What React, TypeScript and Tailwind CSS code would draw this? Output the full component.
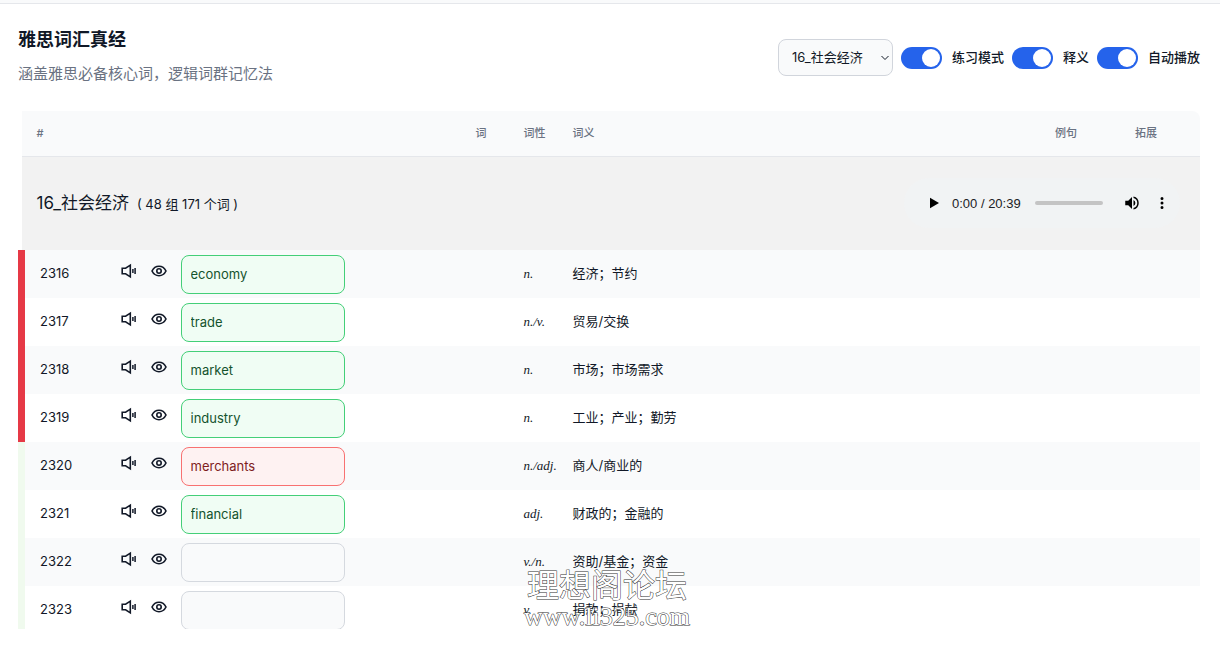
import { useState } from "react";

interface Word {
  id: number;
  answer: string;
  status: "correct" | "wrong" | "empty";
  pos: string;
  meaning: string;
  group: "red" | "green";
}

const words: Word[] = [
  { id: 2316, answer: "economy", status: "correct", pos: "n.", meaning: "经济；节约", group: "red" },
  { id: 2317, answer: "trade", status: "correct", pos: "n./v.", meaning: "贸易/交换", group: "red" },
  { id: 2318, answer: "market", status: "correct", pos: "n.", meaning: "市场；市场需求", group: "red" },
  { id: 2319, answer: "industry", status: "correct", pos: "n.", meaning: "工业；产业；勤劳", group: "red" },
  { id: 2320, answer: "merchants", status: "wrong", pos: "n./adj.", meaning: "商人/商业的", group: "green" },
  { id: 2321, answer: "financial", status: "correct", pos: "adj.", meaning: "财政的；金融的", group: "green" },
  { id: 2322, answer: "", status: "empty", pos: "v./n.", meaning: "资助/基金；资金", group: "green" },
  { id: 2323, answer: "", status: "empty", pos: "v.", meaning: "捐款；捐献", group: "green" },
];

const inputStyles = {
  correct: "bg-[#f0fdf4] border-[#44cf78] text-[#14532d]",
  wrong: "bg-[#fef2f2] border-[#f87171] text-[#7f1d1d]",
  empty: "bg-[#f9fafb] border-[#d5d9df] text-gray-900",
};

const groupStyles = {
  red: "border-l-[#e63946]",
  green: "border-l-[#f0faee]",
};

function SpeakerIcon() {
  return (
    <svg width="16" height="16" viewBox="0 0 16 16" fill="none" stroke="currentColor">
      <path d="M1.2 5.2H4.6L9.3 2.2V13.8L4.6 10.8H1.2Z" strokeWidth="1.6" />
      <path d="M11.9 6V10M14.1 4.9V11.1" strokeWidth="1.5" />
    </svg>
  );
}

function EyeIcon() {
  return (
    <svg width="16" height="16" viewBox="0 0 16 16" fill="none" stroke="currentColor" strokeWidth="1.6">
      <path d="M1 8C2.4 5.1 4.9 3.3 8 3.3S13.6 5.1 15 8C13.6 10.9 11.1 12.7 8 12.7S2.4 10.9 1 8Z" />
      <circle cx="8" cy="8" r="2.2" />
    </svg>
  );
}

function Toggle({ label }: { label: string }) {
  const [on, setOn] = useState(true);
  return (
    <label className="flex items-center cursor-pointer">
      <input
        type="checkbox"
        className="sr-only peer"
        checked={on}
        onChange={(e) => setOn(e.target.checked)}
      />
      <span className="flex items-center w-[41px] h-[22px] p-0.5 rounded-full bg-gray-200 peer-checked:bg-[#2563eb] peer-checked:justify-end">
        <span className="size-[18px] rounded-full bg-white" />
      </span>
      <span className="ml-2.5 text-[13px] font-medium">{label}</span>
    </label>
  );
}

function AudioPlayer() {
  return (
    <div className="flex items-center w-[276px] h-[50px] pl-4 pr-3 rounded-full bg-[#f1f3f4] text-black">
      <button type="button" aria-label="播放" className="p-1">
        <svg width="18" height="18" viewBox="0 0 24 24" fill="currentColor">
          <path d="M8 5v14l12-7z" />
        </svg>
      </button>
      <span className="ml-1.5 font-['Liberation_Sans',sans-serif] text-[13px] whitespace-nowrap text-[#202124]">
        0:00 / 20:39
      </span>
      <input
        type="range"
        min={0}
        max={1239}
        defaultValue={0}
        aria-label="进度"
        className="ml-[14px] w-[68px] h-1 rounded-full bg-[#c4c4c4] appearance-none [&::-webkit-slider-thumb]:appearance-none"
      />
      <button type="button" aria-label="音量" className="ml-4 p-1">
        <svg width="18" height="18" viewBox="0 0 24 24" fill="currentColor">
          <path d="M3 9v6h4l5 5V4L7 9H3zm13.5 3A4.5 4.5 0 0 0 14 7.97v8.05A4.5 4.5 0 0 0 16.5 12zM14 3.23v2.06a7 7 0 0 1 0 13.42v2.06a9 9 0 0 0 0-17.54z" />
        </svg>
      </button>
      <button type="button" aria-label="更多" className="ml-1 p-1">
        <svg width="18" height="18" viewBox="0 0 24 24" fill="currentColor">
          <path d="M12 8a2 2 0 1 0 0-4 2 2 0 0 0 0 4zm0 2a2 2 0 1 0 0 4 2 2 0 0 0 0-4zm0 6a2 2 0 1 0 0 4 2 2 0 0 0 0-4z" />
        </svg>
      </button>
    </div>
  );
}

function WordRow({ word, striped }: { word: Word; striped: boolean }) {
  const [value, setValue] = useState(word.answer);
  return (
    <tr className={striped ? "h-12 bg-[#f9fafb]" : "h-12 bg-white"}>
      <td className={`border-l-[7px] pl-[15px] ${groupStyles[word.group]}`}>{word.id}</td>
      <td colSpan={2} className="pl-[15px]">
        <div className="flex items-center">
          <button type="button" aria-label="播放发音" className="mb-1.5">
            <SpeakerIcon />
          </button>
          <button type="button" aria-label="显示单词" className="ml-3.5 mb-1.5">
            <EyeIcon />
          </button>
          <input
            type="text"
            value={value}
            onChange={(e) => setValue(e.target.value)}
            aria-label={`单词 ${word.id}`}
            className={`ml-3.5 w-[164px] h-[39px] px-[9px] rounded-lg border outline-none ${inputStyles[word.status]}`}
          />
        </div>
      </td>
      <td className="pl-[15px] font-['Liberation_Serif',serif] italic whitespace-nowrap">{word.pos}</td>
      <td className="pl-[15px]">{word.meaning}</td>
      <td />
      <td />
    </tr>
  );
}

export default function App() {
  return (
    <div className="flex flex-col h-screen overflow-hidden bg-white text-[#111827] text-[13px] font-['Inter','Noto_Sans_CJK_SC',sans-serif]">
      <div className="h-1 shrink-0 bg-[#f9fafb] border-b border-gray-200" />

      <header className="flex justify-between items-start shrink-0 pl-[18px] pr-5 pt-[22px]">
        <div>
          <h1 className="text-lg leading-7 font-bold">雅思词汇真经</h1>
          <p className="mt-2 text-[15px] leading-6 text-gray-500">涵盖雅思必备核心词，逻辑词群记忆法</p>
        </div>
        <div className="flex items-center gap-2 mt-[13px]">
          <div className="relative">
            <select
              aria-label="章节"
              className="w-[115px] h-[37px] pl-[13px] rounded-lg border border-gray-300 bg-[#f9fafb] appearance-none"
            >
              <option>16_社会经济</option>
            </select>
            <svg
              className="absolute right-1 top-[15px] pointer-events-none"
              width="8"
              height="8"
              viewBox="0 0 8 8"
              fill="none"
              stroke="currentColor"
            >
              <path d="M0.5 2L4 5.5L7.5 2" />
            </svg>
          </div>
          <Toggle label="练习模式" />
          <Toggle label="释义" />
          <Toggle label="自动播放" />
        </div>
      </header>

      <main className="relative flex-1 min-h-0 mt-[25px] mb-[17px] ml-[18px] mr-5">
        <div className="h-full overflow-hidden rounded-tr-lg">
          <table className="w-full table-fixed border-collapse text-left">
            <colgroup>
              <col className="w-[84px]" />
              <col className="w-[355px]" />
              <col className="w-12" />
              <col className="w-[49px]" />
              <col />
              <col className="w-20" />
              <col className="w-20" />
            </colgroup>
            <thead className="text-[11px] text-gray-500 bg-[#f9fafb]">
              <tr className="h-[45px] border-b border-gray-200">
                <th className="pl-[15px] font-medium">#</th>
                <th />
                <th className="pl-[15px] font-medium">词</th>
                <th className="pl-[15px] font-medium">词性</th>
                <th className="pl-[15px] font-medium">词义</th>
                <th className="pl-[15px] font-medium">例句</th>
                <th className="pl-[15px] font-medium">拓展</th>
              </tr>
            </thead>
            <tbody>
              <tr className="h-[94px] bg-[#f2f2f2]">
                <td colSpan={7} className="pl-[15px] pr-5">
                  <div className="flex justify-between items-center">
                    <h2 className="text-[17px]">
                      16_社会经济
                      <span className="ml-2 text-[13px]">( 48 组 171 个词 )</span>
                    </h2>
                    <AudioPlayer />
                  </div>
                </td>
              </tr>
              {words.map((word, i) => (
                <WordRow key={word.id} word={word} striped={i % 2 === 0} />
              ))}
            </tbody>
          </table>
        </div>

        {/* forum watermark */}
        <div className="absolute left-[503px] -bottom-1 w-[172px] text-center text-white pointer-events-none [paint-order:stroke]">
          <div className="text-[32px] leading-9 font-['Noto_Sans_CJK_SC',sans-serif] [-webkit-text-stroke:1px_#333]">
            理想阁论坛
          </div>
          <div className="text-[26px] leading-8 font-['Liberation_Serif',serif] [-webkit-text-stroke:1px_#333]">
            www.li325.com
          </div>
        </div>
      </main>
    </div>
  );
}
